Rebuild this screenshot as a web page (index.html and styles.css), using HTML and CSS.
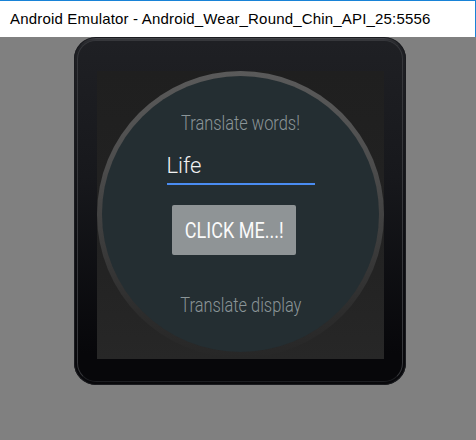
FILE: index.html
```html
<!DOCTYPE html>
<html>
<head>
<meta charset="utf-8">
<link rel="stylesheet" href="styles.css">
</head>
<body>
<div class="window">
  <div class="titlebar">Android Emulator - Android_Wear_Round_Chin_API_25:5556</div>
  <div class="stage">
    <div class="watch">
      <div class="bezel">
        <div class="screen">
          <div class="ring">
            <div class="disc"></div>
          </div>
          <div class="content">
            <div class="label"><span class="cond">Translate words!</span></div>
            <div class="field">
              <div class="field-text">Life</div>
              <div class="field-line"></div>
            </div>
            <div class="button"><span class="cond">CLICK ME...!</span></div>
            <div class="label display"><span class="cond">Translate display</span></div>
          </div>
        </div>
      </div>
    </div>
  </div>
</div>
</body>
</html>
```
FILE: styles.css
```css
html, body {
  margin: 0;
  padding: 0;
}
body {
  width: 476px;
  height: 440px;
  overflow: hidden;
  background: #808080;
}
.window {
  width: 476px;
  height: 440px;
  background: #808080;
}
.titlebar {
  box-sizing: border-box;
  height: 37px;
  background: #ffffff;
  border-top: 1px solid #1883d7;
  border-right: 1px solid #1883d7;
  color: #000;
  font-family: "Liberation Sans", Arial, sans-serif;
  font-size: 15px;
  letter-spacing: 0.18px;
  line-height: 36px;
  padding-left: 10px;
}
.stage {
  padding-left: 74px;
}
.watch {
  box-sizing: border-box;
  width: 332px;
  height: 348px;
  border-radius: 22px;
  padding: 3px;
  background: linear-gradient(to bottom, #57585d 0, #2e2f33 3px, #202125 10px, #0d0e12 60%, #08080b 100%);
  box-shadow: inset 0 0 0 1px #1a1b1f;
}
.bezel {
  box-sizing: border-box;
  height: 342px;
  border-radius: 19px;
  border: 1px solid #36373b;
  border-bottom-color: #1d1e22;
  background: linear-gradient(to bottom, #1f2024 0, #17181c 40%, #07070a 92%);
  padding: 30px 0 0 19px;
}
.screen {
  position: relative;
  width: 287px;
  height: 288px;
  background: linear-gradient(to bottom, #1f1f1f, #232323 70%, #272727);
  overflow: hidden;
}
.ring {
  position: absolute;
  left: 0;
  top: 0;
  width: 287px;
  height: 287px;
  border-radius: 50%;
  background: linear-gradient(to bottom, #5a5a5a 0%, #4e4e4e 30%, #3c3c3c 60%, #2c2c2c 85%, #272727 100%);
}
.disc {
  position: absolute;
  left: 5px;
  top: 5px;
  width: 277px;
  height: 276px;
  border-radius: 50%;
  background: #242e32;
}
.content {
  position: relative;
  display: flex;
  flex-direction: column;
  align-items: center;
  padding-top: 40px;
  font-family: Roboto, "Noto Sans", sans-serif;
}
.label {
  height: 24px;
  line-height: 24px;
  font-size: 20px;
  font-weight: 300;
  color: #8b9598;
  text-align: center;
  white-space: nowrap;
}
.cond {
  display: inline-block;
  transform: scaleX(0.82);
}
.field {
  margin-top: 18px;
  width: 148px;
}
.field-text {
  height: 26px;
  line-height: 26px;
  font-size: 22px;
  font-weight: 300;
  color: #f2f2f2;
}
.field-line {
  margin-top: 4px;
  height: 2px;
  background: #4a8cf2;
}
.button {
  margin-top: 20px;
  margin-right: 13px;
  width: 124px;
  height: 50px;
  border-radius: 2px;
  background: #8f9496;
  color: #fafafa;
  font-size: 22px;
  font-weight: 400;
  display: flex;
  align-items: center;
  justify-content: center;
  white-space: nowrap;
}
.display {
  margin-top: 38px;
}
```
